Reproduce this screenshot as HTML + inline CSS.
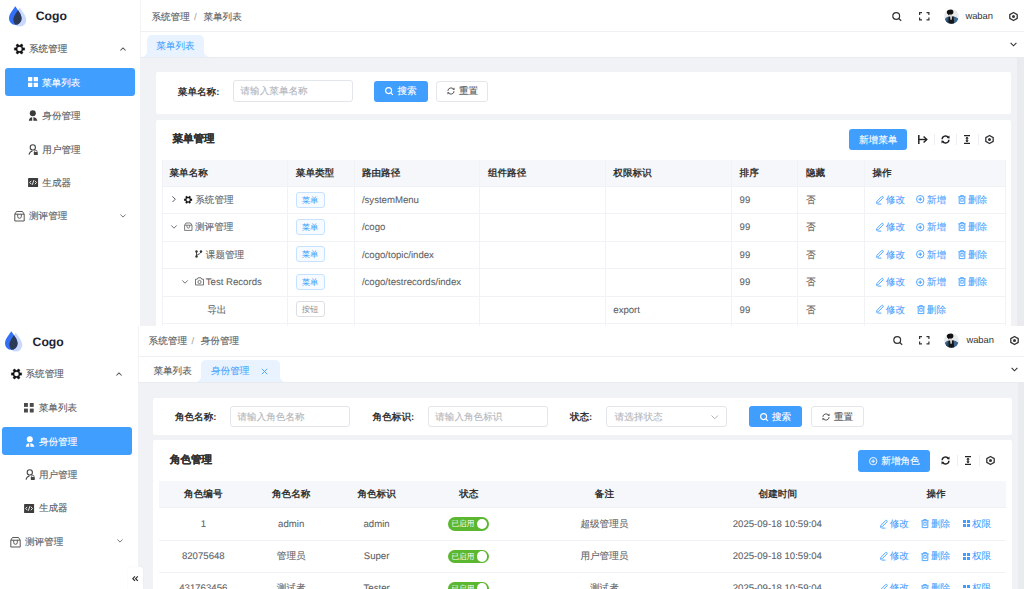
<!DOCTYPE html>
<html><head><meta charset="utf-8"><style>
*{box-sizing:border-box;margin:0;padding:0}
html,body{text-rendering:geometricPrecision;width:1024px;height:589px;overflow:hidden;background:#fff;font-family:"Liberation Sans",sans-serif;color:#5a5d63}
.f{position:absolute;left:0;width:1024px;overflow:hidden;background:#fff}
.a{position:absolute;white-space:nowrap}
.t{font-size:9.6px;line-height:12px;height:12px;margin-top:1px;-webkit-text-stroke:0.1px currentColor}
.b{font-weight:bold;color:#333;-webkit-text-stroke:0}
.side{position:absolute;left:0;top:0;bottom:0;background:#fff}
.gray{position:absolute;background:#f0f2f5}
.card{position:absolute;background:#fff;border-radius:2px}
.inp{position:absolute;border:1px solid #e2e5ea;border-radius:3px;background:#fff}
.ph{color:#b4b6bb}
.btnp{position:absolute;background:#409eff;border-radius:3px;color:#fff}
.btnd{position:absolute;border:1px solid #e3e6eb;border-radius:3px;background:#fff;color:#555}
.hl{position:absolute;height:1px;background:#ebeef5}
.vl{position:absolute;width:1px;background:#ebeef5}
.blue{color:#409eff;-webkit-text-stroke:0.05px #409eff}
.tag{position:absolute;border:1px solid #c6e2ff;border-radius:3px;background:#f7fbff;color:#409eff;font-size:8.3px;line-height:14px;text-align:center}
.tagg{border-color:#dedfe3;background:#fff;color:#909399}
.c{text-align:center}
.td{color:#606266;-webkit-text-stroke:0.08px #606266}
.tab{position:absolute;background:#e8f3ff;border-radius:5px 5px 0 0}
.tab:before,.tab:after{content:"";position:absolute;bottom:0;width:5px;height:5px;background:radial-gradient(circle at 0 0,transparent 5px,#e8f3ff 5.5px)}
.tab:before{left:-5px;background:radial-gradient(circle at 0 0,transparent 4.5px,#e8f3ff 5px)}
.tab:after{right:-5px;background:radial-gradient(circle at 100% 0,transparent 4.5px,#e8f3ff 5px)}
.cogo{font-size:12.2px;line-height:14px;font-weight:bold;color:#1d2433}
.tt{font-size:10.5px;line-height:14px;-webkit-text-stroke:0.25px #333}
svg{position:absolute;overflow:visible}
</style></head><body>

<svg width="0" height="0" style="position:absolute">
<defs>
 <g id="gear"><path fill="#111" fill-rule="evenodd" stroke="#111" stroke-width="0.2" stroke-linejoin="round" d="M8.98 3.73 L10.76 3.79 L10.76 6.21 L8.98 6.27 L8.33 7.38 L9.18 8.95 L7.08 10.16 L6.14 8.64 L4.86 8.64 L3.92 10.16 L1.82 8.95 L2.67 7.38 L2.02 6.27 L0.24 6.21 L0.24 3.79 L2.02 3.73 L2.67 2.62 L1.82 1.05 L3.92 -0.16 L4.86 1.36 L6.14 1.36 L7.08 -0.16 L9.18 1.05 L8.33 2.62Z M7.80 5.0 A2.3 2.3 0 1 0 3.20 5.0 A2.3 2.3 0 1 0 7.80 5.0Z"/></g>
 <g id="grid"><rect x="0" y="0" width="4.3" height="4.3" rx="0.5"/><rect x="5.7" y="0" width="4.3" height="4.3" rx="0.5"/><rect x="0" y="5.7" width="4.3" height="4.3" rx="0.5"/><rect x="5.7" y="5.7" width="4.3" height="4.3" rx="0.5"/></g>
 <g id="role"><circle cx="4.8" cy="3.2" r="3"/><path d="M0.8 10.8 C1 8.6 2.2 7.4 4.2 7.2 L4.2 10.8Z"/><path d="M5.4 7.2 C7.6 7.4 9 8.6 9.4 10.8 L5.4 10.8Z"/></g>
 <g id="user"><circle cx="4.8" cy="3.4" r="2.6" fill="none" stroke="#444" stroke-width="1.1"/><path d="M1 10.6 C1.5 8.6 2.8 7.3 4.5 7" fill="none" stroke="#444" stroke-width="1.1"/><rect x="5.8" y="8" width="4" height="3" rx="0.4" fill="#444"/><path d="M6.6 8.2 V7.4 A1.2 1.2 0 0 1 9 7.4 V8.2" fill="none" stroke="#444" stroke-width="0.8"/></g>
 <g id="code"><rect x="0" y="0" width="10" height="9" rx="0.6" fill="#3d3d3d"/><path d="M3.2 2.8 L1.6 4.5 L3.2 6.2 M6.8 2.8 L8.4 4.5 L6.8 6.2 M5.8 2.2 L4.2 6.8" fill="none" stroke="#fff" stroke-width="0.9"/></g>
 <g id="box"><path d="M0.8 4.2 L2.5 1.5 L8.5 1.5 L10.2 4.2 L10.2 11 L0.8 11 Z M0.8 4.2 L10.2 4.2" fill="none" stroke="#555" stroke-width="1"/><path d="M3.7 4.2 V6.5 A1.8 1.8 0 0 0 7.3 6.5 V4.2" fill="none" stroke="#555" stroke-width="1"/></g>
 <g id="search"><circle cx="4.2" cy="4" r="3.4" fill="none" stroke="#333" stroke-width="1.2"/><path d="M6.7 6.5 L9.2 8.8" stroke="#333" stroke-width="1.2"/></g>
 <g id="search2"><circle cx="3.6" cy="3.6" r="3" fill="none" stroke-width="1.1"/><path d="M5.8 5.8 L7.9 7.9" stroke-width="1.2"/></g>
 <g id="full"><path d="M0.6 3 V0.6 H3 M7.5 0.6 H9.9 V3 M9.9 5.5 V7.9 H7.5 M3 7.9 H0.6 V5.5" fill="none" stroke="#333" stroke-width="1.2"/></g>
 <g id="hex"><path d="M4.5 0.5 L8.2 2.6 L8.2 6.4 L4.5 8.5 L0.8 6.4 L0.8 2.6 Z" fill="none" stroke="#333" stroke-width="1.3" stroke-linejoin="round"/><circle cx="4.5" cy="4.5" r="1.5" fill="#333"/></g>
 <g id="refresh"><path d="M1.1 4.3 A3.4 3.4 0 0 1 7.4 2.6" fill="none" stroke="#222" stroke-width="1.4"/><path d="M7.9 4.7 A3.4 3.4 0 0 1 1.6 6.4" fill="none" stroke="#222" stroke-width="1.4"/><path d="M5.6 2.9 L8.6 3.6 L8.4 0.6Z" fill="#222"/><path d="M3.4 6.1 L0.4 5.4 L0.6 8.4Z" fill="#222"/></g>
 <g id="refresh2"><path d="M0.9 3.9 A3.1 3.1 0 0 1 6.6 2.3" fill="none" stroke="#555" stroke-width="1"/><path d="M7.1 4.1 A3.1 3.1 0 0 1 1.4 5.7" fill="none" stroke="#555" stroke-width="1"/><path d="M5.3 2.5 L7.6 3 L7.5 0.6Z" fill="#555"/><path d="M2.7 5.5 L0.4 5 L0.5 7.4Z" fill="#555"/></g>
 <g id="export"><path d="M0.8 0 V9" stroke="#222" stroke-width="1.5"/><path d="M0.8 4.5 H8.6" stroke="#222" stroke-width="1.4"/><path d="M5.6 1.4 L8.8 4.5 L5.6 7.6" fill="none" stroke="#222" stroke-width="1.4"/></g>
 <g id="height"><path d="M0 0.6 H6 M0 8.4 H6" stroke="#222" stroke-width="1.2"/><path d="M3 2.6 V6.4" stroke="#222" stroke-width="1.3"/><path d="M1.2 3.6 L3 1.7 L4.8 3.6Z M1.2 5.4 L3 7.3 L4.8 5.4Z" fill="#222"/></g>
 <g id="edit"><path d="M1.6 8.4 L1.9 6.4 L6.6 1.6 A0.95 0.95 0 0 1 7.95 2.95 L3.2 7.7 Z" fill="none" stroke="#409eff" stroke-width="0.9" stroke-linejoin="round"/><path d="M2.6 9.1 H6.4" stroke="#409eff" stroke-width="0.9"/></g>
 <g id="plus"><circle cx="4.2" cy="4.2" r="3.7" fill="none" stroke="#409eff" stroke-width="0.9"/><path d="M4.2 2.4 V6 M2.4 4.2 H6" stroke="#409eff" stroke-width="1"/></g>
 <g id="plus2"><circle cx="4.2" cy="4.2" r="3.7" fill="none" stroke="#fff" stroke-width="0.9"/><path d="M4.2 2.3 V6.1 M2.3 4.2 H6.1" stroke="#fff" stroke-width="0.9"/></g>
 <g id="del"><path d="M0.3 1.8 H7.7 M2.6 1.8 V0.6 H5.4 V1.8 M1.2 1.8 V8.6 H6.8 V1.8" fill="none" stroke="#409eff" stroke-width="0.9"/><rect x="2.8" y="3.6" width="2.4" height="2.6" fill="none" stroke="#409eff" stroke-width="0.8"/></g>
 <g id="perm"><rect x="0" y="0" width="3" height="3" fill="#409eff"/><rect x="4" y="0" width="3" height="3" fill="#409eff"/><rect x="0" y="4" width="3" height="3" fill="#409eff"/><rect x="4" y="4" width="3" height="3" fill="#409eff"/></g>
 <g id="branch"><circle cx="1.5" cy="1.5" r="1.2" fill="#333"/><circle cx="1.5" cy="6.5" r="1.2" fill="#333"/><circle cx="6" cy="1.5" r="1.2" fill="#333"/><path d="M1.5 1.5 V6.5 M6 1.5 C6 4 3 4 1.5 5.5" fill="none" stroke="#333" stroke-width="0.9"/></g>
 <g id="camera"><path d="M0.5 2.2 H2.3 L3 0.8 H6 L6.7 2.2 H8.5 V8 H0.5 Z" fill="none" stroke="#666" stroke-width="0.9"/><circle cx="4.5" cy="5" r="1.6" fill="none" stroke="#666" stroke-width="0.9"/></g>
 <g id="box2"><path d="M0.6 3.2 L2 1 L6.6 1 L8 3.2 L8 8.4 L0.6 8.4 Z M0.6 3.2 H8" fill="none" stroke="#666" stroke-width="0.85"/><path d="M3 3.2 V4.8 A1.3 1.3 0 0 0 5.6 4.8 V3.2" fill="none" stroke="#666" stroke-width="0.85"/></g>
 <g id="gear2"><use href="#gear" transform="scale(0.75)"/></g>
 <g id="avatar">
   <clipPath id="avc"><circle cx="7.5" cy="7.5" r="7.3"/></clipPath>
   <g clip-path="url(#avc)">
     <rect width="15" height="15" fill="#e9eaec"/>
     <path d="M0 15 L0.5 10.5 C1.5 8.5 3.5 7.8 5 7.6 L10 7.4 C12 7.8 14 9 15 10.5 L15 15Z" fill="#3d678f"/>
     <path d="M1.5 13 C3 10 4 9 5 8.6 L4.5 15 Z" fill="#2a4a6a"/>
     <path d="M4.6 7.8 L9.6 7.6 L10.2 15 L4.4 15Z" fill="#151517"/>
     <path d="M5.6 4.4 L8 4.4 L7.9 10.6 L6.6 11 Z" fill="#dcd3c4"/>
     <ellipse cx="6.1" cy="2.9" rx="3.3" ry="2.6" fill="#111"/>
     <path d="M3.2 3.5 L4.8 6.5 L5.6 4.6Z" fill="#111"/>
   </g>
 </g>
</defs></svg>

<!-- ================= FRAME 1 ================= -->
<div class="f" style="top:0;height:326px">
  <!-- content gray -->
  <div class="gray" style="left:140px;top:57px;width:884px;height:269px"></div>
  <div class="a" style="left:1017px;top:57px;width:7px;height:269px;background:#e9ebef"></div>
  <!-- sidebar -->
  <div class="side" style="width:140px">
    <svg style="left:0;top:0" width="30" height="30" viewBox="0 0 30 30">
      <path d="M19.8 7.7 C22 11 26.3 15.8 26.3 20.1 A6.5 6.5 0 0 1 13.3 20.1 C13.3 15.8 17.6 11 19.8 7.7Z" fill="#c9d8fb"/>
      <path d="M15.3 6.3 C17.5 9.6 21.6 14 21.6 18.5 A6.3 6.3 0 0 1 9 18.5 C9 14 13.1 9.6 15.3 6.3Z" fill="#3370f5"/>
      <clipPath id="c1"><path d="M19.8 7.7 C22 11 26.3 15.8 26.3 20.1 A6.5 6.5 0 0 1 13.3 20.1 C13.3 15.8 17.6 11 19.8 7.7Z"/></clipPath>
      <path clip-path="url(#c1)" d="M15.3 6.3 C17.5 9.6 21.6 14 21.6 18.5 A6.3 6.3 0 0 1 9 18.5 C9 14 13.1 9.6 15.3 6.3Z" fill="#2c3a55"/>
    </svg>
    <div class="a cogo" style="left:35.8px;top:9.3px">Cogo</div>

    <svg style="left:14px;top:43.6px" width="11" height="10" viewBox="0 0 11 10"><use href="#gear"/></svg>
    <div class="a t" style="left:28.9px;top:43px;color:#555">系统管理</div>
    <svg style="left:120px;top:47px" width="6" height="4" viewBox="0 0 6 4"><path d="M0.4 3.5 L3 0.9 L5.6 3.5" fill="none" stroke="#555" stroke-width="1.05"/></svg>

    <div class="a" style="left:5px;top:68px;width:130px;height:28px;background:#409eff;border-radius:3px"></div>
    <svg style="left:28px;top:77px" width="10" height="10" viewBox="0 0 10 10"><use href="#grid" fill="#fff"/></svg>
    <div class="a t" style="left:42px;top:76.5px;color:#fff">菜单列表</div>

    <svg style="left:28px;top:109.5px" width="10" height="11" viewBox="0 0 10 11"><use href="#role" fill="#3a3a3a"/></svg>
    <div class="a t" style="left:42.3px;top:109.5px">身份管理</div>

    <svg style="left:28px;top:143.5px" width="10" height="11" viewBox="0 0 10 11"><use href="#user" /></svg>
    <div class="a t" style="left:42.3px;top:143.5px">用户管理</div>

    <svg style="left:27.7px;top:177.8px" width="10.2" height="9" viewBox="0 0 10 9"><use href="#code"/></svg>
    <div class="a t" style="left:42.3px;top:176.5px">生成器</div>

    <svg style="left:13.9px;top:210px" width="11" height="11.6" viewBox="0 0 11 11.6"><use href="#box"/></svg>
    <div class="a t" style="left:29px;top:210.1px">测评管理</div>
    <svg style="left:120px;top:213.5px" width="6" height="4" viewBox="0 0 6 4"><path d="M0.4 0.5 L3 3.1 L5.6 0.5" fill="none" stroke="#777" stroke-width="1"/></svg>
  </div>
  <div class="vl" style="left:140px;top:0;height:57px;background:#f2f3f5"></div>

  <!-- header -->
  <div class="a t" style="left:151.4px;top:10.9px">系统管理</div>
  <div class="a t" style="left:194px;top:10.9px;color:#aaa">/</div>
  <div class="a t" style="left:203.4px;top:10.9px">菜单列表</div>
  <svg style="left:892.4px;top:12px" width="10" height="9" viewBox="0 0 10 9"><use href="#search"/></svg>
  <svg style="left:918.7px;top:12px" width="10.5" height="8.5" viewBox="0 0 10.5 8.5"><use href="#full"/></svg>
  <svg style="left:944px;top:8.5px" width="15" height="15" viewBox="0 0 15 15"><use href="#avatar"/></svg>
  <div class="a" style="left:965.4px;top:10px;font-size:9.4px;line-height:12px;color:#333">waban</div>
  <svg style="left:1008.9px;top:11.6px" width="9" height="9" viewBox="0 0 9 9"><use href="#hex"/></svg>
  <div class="hl" style="left:140px;top:31px;width:884px;background:#eef0f3"></div>

  <!-- tabs -->
  <div class="tab" style="left:147px;top:35px;width:57.3px;height:22px"></div>
  <div class="hl" style="left:140px;top:57px;width:877px;background:#e9ebee"></div>
  <div class="a t blue" style="left:156.2px;top:40px">菜单列表</div>
  <svg style="left:1010px;top:42px" width="7" height="5" viewBox="0 0 7 5"><path d="M0.6 0.8 L3.5 3.8 L6.4 0.8" fill="none" stroke="#333" stroke-width="1.1"/></svg>

  <!-- search card -->
  <div class="card" style="left:156px;top:72.3px;width:855px;height:41.8px"></div>
  <div class="a t b" style="left:177.8px;top:85.5px">菜单名称:</div>
  <div class="inp" style="left:233.2px;top:80.4px;width:120.2px;height:21.2px"></div>
  <div class="a t ph" style="left:240.5px;top:85px">请输入菜单名称</div>
  <div class="btnp" style="left:374px;top:80.5px;width:53.5px;height:21.5px"></div>
  <svg style="left:385.3px;top:87.2px" width="8" height="8" viewBox="0 0 8 8"><use href="#search2" stroke="#fff"/></svg>
  <div class="a t" style="left:397.5px;top:85px;color:#fff">搜索</div>
  <div class="btnd" style="left:435.7px;top:80.5px;width:52.6px;height:21.5px"></div>
  <svg style="left:447px;top:87px" width="8" height="8" viewBox="0 0 8 8"><use href="#refresh2"/></svg>
  <div class="a t" style="left:459px;top:85px">重置</div>

  <!-- table card -->
  <div class="card" style="left:156px;top:120px;width:855px;height:220px"></div>
  <div class="a b tt" style="left:172.5px;top:132px">菜单管理</div>
  <div class="btnp" style="left:849px;top:129px;width:58px;height:21px"></div>
  <div class="a t" style="left:859px;top:133.5px;color:#fff">新增菜单</div>
  <svg style="left:917.9px;top:135px" width="10" height="9" viewBox="0 0 10 9"><use href="#export"/></svg>
  <div class="vl" style="left:933.7px;top:134px;height:11px;background:#eceef1"></div>
  <svg style="left:940.9px;top:135px" width="9" height="9" viewBox="0 0 9 9"><use href="#refresh"/></svg>
  <div class="vl" style="left:956.1px;top:134px;height:11px;background:#eceef1"></div>
  <svg style="left:964.3px;top:135px" width="6" height="9" viewBox="0 0 6 9"><use href="#height"/></svg>
  <div class="vl" style="left:978.1px;top:134px;height:11px;background:#eceef1"></div>
  <svg style="left:984.9px;top:135px" width="9" height="9" viewBox="0 0 9 9"><use href="#hex"/></svg>

  <!-- table -->
  <div class="a" style="left:162.2px;top:160px;width:842.8px;height:26px;background:#f5f7fa"></div>
  <div class="a t b" style="left:169.5px;top:166.7px;">菜单名称</div>
<div class="a t b" style="left:295.8px;top:166.7px;">菜单类型</div>
<div class="a t b" style="left:361.9px;top:166.7px;">路由路径</div>
<div class="a t b" style="left:487.9px;top:166.7px;">组件路径</div>
<div class="a t b" style="left:613.3px;top:166.7px;">权限标识</div>
<div class="a t b" style="left:739.6px;top:166.7px;">排序</div>
<div class="a t b" style="left:806px;top:166.7px;">隐藏</div>
<div class="a t b" style="left:872.5px;top:166.7px;">操作</div>
<div class="vl" style="left:287.2px;top:160px;height:167px;background:#f0f2f5"></div>
<div class="vl" style="left:353.8px;top:160px;height:167px;background:#f0f2f5"></div>
<div class="vl" style="left:478.9px;top:160px;height:167px;background:#f0f2f5"></div>
<div class="vl" style="left:605px;top:160px;height:167px;background:#f0f2f5"></div>
<div class="vl" style="left:730.8px;top:160px;height:167px;background:#f0f2f5"></div>
<div class="vl" style="left:797.4px;top:160px;height:167px;background:#f0f2f5"></div>
<div class="vl" style="left:864px;top:160px;height:167px;background:#f0f2f5"></div>
<div class="vl" style="left:162.2px;top:160px;height:167px;background:#f0f2f5"></div>
<div class="vl" style="left:1005px;top:160px;height:167px;background:#f0f2f5"></div>
<div class="hl" style="left:162.2px;top:186px;width:842.8px;background:#f1f2f5"></div>
<div class="hl" style="left:162.2px;top:213px;width:842.8px;background:#f1f2f5"></div>
<div class="hl" style="left:162.2px;top:240.5px;width:842.8px;background:#f1f2f5"></div>
<div class="hl" style="left:162.2px;top:268px;width:842.8px;background:#f1f2f5"></div>
<div class="hl" style="left:162.2px;top:295.5px;width:842.8px;background:#f1f2f5"></div>
<div class="hl" style="left:162.2px;top:323px;width:842.8px;background:#f1f2f5"></div>
<svg style="left:172.3px;top:196.4px" width="4" height="6.4" viewBox="0 0 4 6.4"><path d="M0.5 0.4 L3.3 3.2 L0.5 6" fill="none" stroke="#555" stroke-width="1"/></svg>
<svg style="left:184.2px;top:195.7px" width="8.2" height="7.6" viewBox="0 0 8.2 7.6" ><use href="#gear2"/></svg>
<div class="a t td" style="left:195.2px;top:194.1px;">系统管理</div>
<div class="tag" style="left:295.5px;top:191.5px;width:29px;height:16px">菜单</div>
<div class="a t td" style="left:361.9px;top:194.1px;">/systemMenu</div>
<div class="a t td" style="left:739.6px;top:194.1px;">99</div>
<div class="a t td" style="left:806px;top:194.1px;">否</div>
<svg style="left:875.3px;top:194.5px" width="9" height="10" viewBox="0 0 9 10" ><use href="#edit"/></svg>
<div class="a t blue" style="left:885.8px;top:194.1px;">修改</div>
<svg style="left:916.3px;top:195.3px" width="8.5" height="8.5" viewBox="0 0 8.5 8.5" ><use href="#plus"/></svg>
<div class="a t blue" style="left:926.8px;top:194.1px;">新增</div>
<svg style="left:957.9px;top:194.9px" width="8" height="9" viewBox="0 0 8 9" ><use href="#del"/></svg>
<div class="a t blue" style="left:967.9px;top:194.1px;">删除</div>
<svg style="left:171.2px;top:224.95px" width="6" height="4" viewBox="0 0 6 4"><path d="M0.3 0.4 L3 3.2 L5.7 0.4" fill="none" stroke="#666" stroke-width="0.9"/></svg>
<svg style="left:184px;top:222.25px" width="8.6" height="9" viewBox="0 0 8.6 9" ><use href="#box2"/></svg>
<div class="a t td" style="left:195px;top:221.35px;">测评管理</div>
<div class="tag" style="left:295.5px;top:218.75px;width:29px;height:16px">菜单</div>
<div class="a t td" style="left:361.9px;top:221.35px;">/cogo</div>
<div class="a t td" style="left:739.6px;top:221.35px;">99</div>
<div class="a t td" style="left:806px;top:221.35px;">否</div>
<svg style="left:875.3px;top:221.75px" width="9" height="10" viewBox="0 0 9 10" ><use href="#edit"/></svg>
<div class="a t blue" style="left:885.8px;top:221.35px;">修改</div>
<svg style="left:916.3px;top:222.55px" width="8.5" height="8.5" viewBox="0 0 8.5 8.5" ><use href="#plus"/></svg>
<div class="a t blue" style="left:926.8px;top:221.35px;">新增</div>
<svg style="left:957.9px;top:222.15px" width="8" height="9" viewBox="0 0 8 9" ><use href="#del"/></svg>
<div class="a t blue" style="left:967.9px;top:221.35px;">删除</div>
<svg style="left:195px;top:250.25px" width="7.5" height="8" viewBox="0 0 7.5 8" ><use href="#branch"/></svg>
<div class="a t td" style="left:205.8px;top:248.85px;">课题管理</div>
<div class="tag" style="left:295.5px;top:246.25px;width:29px;height:16px">菜单</div>
<div class="a t td" style="left:361.9px;top:248.85px;">/cogo/topic/index</div>
<div class="a t td" style="left:739.6px;top:248.85px;">99</div>
<div class="a t td" style="left:806px;top:248.85px;">否</div>
<svg style="left:875.3px;top:249.25px" width="9" height="10" viewBox="0 0 9 10" ><use href="#edit"/></svg>
<div class="a t blue" style="left:885.8px;top:248.85px;">修改</div>
<svg style="left:916.3px;top:250.05px" width="8.5" height="8.5" viewBox="0 0 8.5 8.5" ><use href="#plus"/></svg>
<div class="a t blue" style="left:926.8px;top:248.85px;">新增</div>
<svg style="left:957.9px;top:249.65px" width="8" height="9" viewBox="0 0 8 9" ><use href="#del"/></svg>
<div class="a t blue" style="left:967.9px;top:248.85px;">删除</div>
<svg style="left:182px;top:279.95px" width="6" height="4" viewBox="0 0 6 4"><path d="M0.3 0.4 L3 3.2 L5.7 0.4" fill="none" stroke="#666" stroke-width="0.9"/></svg>
<svg style="left:194.6px;top:277.45px" width="9" height="8.6" viewBox="0 0 9 8.6" ><use href="#camera"/></svg>
<div class="a t td" style="left:205.8px;top:276.35px;">Test Records</div>
<div class="tag" style="left:295.5px;top:273.75px;width:29px;height:16px">菜单</div>
<div class="a t td" style="left:361.9px;top:276.35px;">/cogo/testrecords/index</div>
<div class="a t td" style="left:739.6px;top:276.35px;">99</div>
<div class="a t td" style="left:806px;top:276.35px;">否</div>
<svg style="left:875.3px;top:276.75px" width="9" height="10" viewBox="0 0 9 10" ><use href="#edit"/></svg>
<div class="a t blue" style="left:885.8px;top:276.35px;">修改</div>
<svg style="left:916.3px;top:277.55px" width="8.5" height="8.5" viewBox="0 0 8.5 8.5" ><use href="#plus"/></svg>
<div class="a t blue" style="left:926.8px;top:276.35px;">新增</div>
<svg style="left:957.9px;top:277.15px" width="8" height="9" viewBox="0 0 8 9" ><use href="#del"/></svg>
<div class="a t blue" style="left:967.9px;top:276.35px;">删除</div>
<div class="a t td" style="left:207.2px;top:303.85px;">导出</div>
<div class="tag tagg" style="left:295.5px;top:301.25px;width:29px;height:16px">按钮</div>
<div class="a t td" style="left:361.9px;top:303.85px;"></div>
<div class="a t td" style="left:613.3px;top:303.85px;">export</div>
<div class="a t td" style="left:739.6px;top:303.85px;">99</div>
<div class="a t td" style="left:806px;top:303.85px;">否</div>
<svg style="left:875.3px;top:304.25px" width="9" height="10" viewBox="0 0 9 10" ><use href="#edit"/></svg>
<div class="a t blue" style="left:885.8px;top:303.85px;">修改</div>
<svg style="left:916.8px;top:304.65px" width="8" height="9" viewBox="0 0 8 9" ><use href="#del"/></svg>
<div class="a t blue" style="left:926.8px;top:303.85px;">删除</div>
</div>

<!-- ================= FRAME 2 ================= -->
<div class="f" style="top:326px;height:263px">
 <div class="a" style="left:0;top:-326px;width:1024px;height:589px">
  <!-- content gray -->
  <div class="gray" style="left:137.5px;top:382px;width:886.5px;height:207px"></div>
  <div class="a" style="left:1017.5px;top:382px;width:6.5px;height:207px;background:#e9ebef"></div>
  <!-- sidebar -->
  <div class="a" style="left:0;top:326px;width:137.5px;height:263px;background:#fff"></div>
  <svg style="left:-4.1px;top:325px" width="30" height="30" viewBox="0 0 30 30">
      <path d="M19.8 7.7 C22 11 26.3 15.8 26.3 20.1 A6.5 6.5 0 0 1 13.3 20.1 C13.3 15.8 17.6 11 19.8 7.7Z" fill="#c9d8fb"/>
      <path d="M15.3 6.3 C17.5 9.6 21.6 14 21.6 18.5 A6.3 6.3 0 0 1 9 18.5 C9 14 13.1 9.6 15.3 6.3Z" fill="#3370f5"/>
      <path clip-path="url(#c1)" d="M15.3 6.3 C17.5 9.6 21.6 14 21.6 18.5 A6.3 6.3 0 0 1 9 18.5 C9 14 13.1 9.6 15.3 6.3Z" fill="#2c3a55"/>
  </svg>
  <div class="a cogo" style="left:32.6px;top:334.5px">Cogo</div>

  <svg style="left:10.5px;top:368.5px" width="11" height="10" viewBox="0 0 11 10"><use href="#gear"/></svg>
  <div class="a t side-t" style="left:25.5px;top:368px">系统管理</div>
  <svg style="left:116.3px;top:372px" width="6" height="4" viewBox="0 0 6 4"><path d="M0.4 3.5 L3 0.9 L5.6 3.5" fill="none" stroke="#555" stroke-width="1.05"/></svg>

  <svg style="left:24.4px;top:403px" width="10" height="10" viewBox="0 0 10 10"><rect x="0" y="0" width="3.9" height="3.9" fill="#4a4a4a"/><rect x="5.8" y="0" width="3.9" height="3.9" fill="#4a4a4a"/><rect x="0" y="5.6" width="3.9" height="3.9" fill="#4a4a4a"/><rect x="5.8" y="5.6" width="3.9" height="3.9" fill="#4a4a4a"/></svg>
  <div class="a t side-t" style="left:38.7px;top:401.5px">菜单列表</div>

  <div class="a" style="left:1.5px;top:426.7px;width:130.5px;height:28.3px;background:#409eff;border-radius:3px"></div>
  <svg style="left:24.9px;top:435.5px" width="10" height="11" viewBox="0 0 10 11"><use href="#role" fill="#fff"/></svg>
  <div class="a t" style="left:38.9px;top:435.5px;color:#fff">身份管理</div>

  <svg style="left:24.5px;top:469px" width="10" height="11" viewBox="0 0 10 11"><use href="#user"/></svg>
  <div class="a t side-t" style="left:38.9px;top:468.9px">用户管理</div>

  <svg style="left:24.2px;top:503.5px" width="10.2" height="9" viewBox="0 0 10 9"><use href="#code"/></svg>
  <div class="a t side-t" style="left:38.9px;top:502.3px">生成器</div>

  <svg style="left:10px;top:535.5px" width="11" height="11.6" viewBox="0 0 11 11.6"><use href="#box"/></svg>
  <div class="a t side-t" style="left:24.9px;top:535.7px">测评管理</div>
  <svg style="left:116.8px;top:539.3px" width="6" height="4" viewBox="0 0 6 4"><path d="M0.4 0.5 L3 3.1 L5.6 0.5" fill="none" stroke="#777" stroke-width="1"/></svg>

  <!-- collapse button -->
  <div class="a" style="left:127.5px;top:567px;width:15.6px;height:30px;background:#fff;border-radius:3px;box-shadow:0 0 1.5px rgba(0,0,0,0.08)"></div>
  <svg style="left:132.2px;top:575.8px" width="6.3" height="5.3" viewBox="0 0 6.3 5.3"><path d="M3 0.4 L0.8 2.65 L3 4.9 M5.8 0.4 L3.6 2.65 L5.8 4.9" fill="none" stroke="#222" stroke-width="1.1"/></svg>

  <div class="vl" style="left:137.5px;top:326px;height:56px;background:#f2f3f5"></div>

  <!-- header -->
  <div class="a t" style="left:148.6px;top:335.4px">系统管理</div>
  <div class="a t" style="left:191.5px;top:335.4px;color:#aaa">/</div>
  <div class="a t" style="left:200.7px;top:335.4px">身份管理</div>
  <svg style="left:892.5px;top:335.8px" width="10" height="9" viewBox="0 0 10 9"><use href="#search"/></svg>
  <svg style="left:919.3px;top:335.8px" width="10.5" height="8.5" viewBox="0 0 10.5 8.5"><use href="#full"/></svg>
  <svg style="left:944.3px;top:332.5px" width="15" height="15" viewBox="0 0 15 15"><use href="#avatar"/></svg>
  <div class="a" style="left:966.4px;top:333.8px;font-size:9.4px;line-height:12px;color:#333">waban</div>
  <svg style="left:1009.8px;top:335.6px" width="9" height="9" viewBox="0 0 9 9"><use href="#hex"/></svg>
  <div class="hl" style="left:137.5px;top:356.3px;width:886.5px;background:#eef0f3"></div>

  <!-- tabs -->
  <div class="a t" style="left:153.4px;top:365.3px">菜单列表</div>
  <div class="tab" style="left:201px;top:359.7px;width:79px;height:22.3px"></div>
  <div class="hl" style="left:137.5px;top:382px;width:880px;background:#e9ebee"></div>
  <div class="a t blue" style="left:211px;top:365.3px">身份管理</div>
  <svg style="left:261.4px;top:368px" width="7" height="7" viewBox="0 0 7 7"><path d="M0.8 0.8 L6.2 6.2 M6.2 0.8 L0.8 6.2" stroke="#409eff" stroke-width="0.9"/></svg>
  <svg style="left:1010.6px;top:366.8px" width="7" height="5" viewBox="0 0 7 5"><path d="M0.6 0.8 L3.5 3.8 L6.4 0.8" fill="none" stroke="#333" stroke-width="1.1"/></svg>

  <!-- search card -->
  <div class="card" style="left:153.3px;top:397.8px;width:858.4px;height:37.3px"></div>
  <div class="a t b" style="left:174.9px;top:410.5px">角色名称:</div>
  <div class="inp" style="left:230.2px;top:405.5px;width:120.2px;height:21.5px"></div>
  <div class="a t ph" style="left:237.4px;top:410.5px">请输入角色名称</div>
  <div class="a t b" style="left:372.6px;top:410.5px">角色标识:</div>
  <div class="inp" style="left:428px;top:405.5px;width:120.3px;height:21.5px"></div>
  <div class="a t ph" style="left:435.2px;top:410.5px">请输入角色标识</div>
  <div class="a t b" style="left:569.9px;top:410.5px">状态:</div>
  <div class="inp" style="left:606.4px;top:406px;width:120.2px;height:21.2px"></div>
  <div class="a t ph" style="left:614.7px;top:410.5px">请选择状态</div>
  <svg style="left:711px;top:415px" width="7.5" height="4.5" viewBox="0 0 7.5 4.5"><path d="M0.5 0.5 L3.75 3.8 L7 0.5" fill="none" stroke="#aaa" stroke-width="0.9"/></svg>
  <div class="btnp" style="left:748.5px;top:406px;width:53.8px;height:21.2px"></div>
  <svg style="left:759.8px;top:412.6px" width="8" height="8" viewBox="0 0 8 8"><use href="#search2" stroke="#fff"/></svg>
  <div class="a t" style="left:772px;top:410.5px;color:#fff">搜索</div>
  <div class="btnd" style="left:810.6px;top:406px;width:53.1px;height:21.2px"></div>
  <svg style="left:821.5px;top:412.5px" width="8" height="8" viewBox="0 0 8 8"><use href="#refresh2"/></svg>
  <div class="a t" style="left:834px;top:410.5px">重置</div>

  <!-- table card -->
  <div class="card" style="left:153.4px;top:440.3px;width:858.3px;height:160px"></div>
  <div class="a b tt" style="left:169.9px;top:452.6px">角色管理</div>
  <div class="btnp" style="left:857.5px;top:450.2px;width:72.7px;height:21.4px"></div>
  <svg style="left:868.8px;top:456.8px" width="8.4" height="8.4" viewBox="0 0 8.4 8.4"><use href="#plus2"/></svg>
  <div class="a t" style="left:881.3px;top:455px;color:#fff">新增角色</div>
  <svg style="left:941.4px;top:456.4px" width="9" height="9" viewBox="0 0 9 9"><use href="#refresh"/></svg>
  <div class="vl" style="left:957.1px;top:455px;height:11px;background:#eceef1"></div>
  <svg style="left:965.2px;top:456.4px" width="6" height="9" viewBox="0 0 6 9"><use href="#height"/></svg>
  <div class="vl" style="left:978.5px;top:455px;height:11px;background:#eceef1"></div>
  <svg style="left:985.6px;top:456.4px" width="9" height="9" viewBox="0 0 9 9"><use href="#hex"/></svg>

  <!-- table -->
  <div class="a" style="left:159.3px;top:480.7px;width:846.7px;height:26.6px;background:#f5f7fa"></div>
  <div class="a t c b" style="left:103.30px;top:487.8px;width:200px;">角色编号</div>
<div class="a t c b" style="left:191.20px;top:487.8px;width:200px;">角色名称</div>
<div class="a t c b" style="left:276.60px;top:487.8px;width:200px;">角色标识</div>
<div class="a t c b" style="left:368.80px;top:487.8px;width:200px;">状态</div>
<div class="a t c b" style="left:504.40px;top:487.8px;width:200px;">备注</div>
<div class="a t c b" style="left:677.80px;top:487.8px;width:200px;">创建时间</div>
<div class="a t c b" style="left:836.00px;top:487.8px;width:200px;">操作</div>
<div class="hl" style="left:159.3px;top:507.3px;width:846.7px;background:#f1f2f5"></div>
<div class="hl" style="left:159.3px;top:540.3px;width:846.7px;background:#f1f2f5"></div>
<div class="hl" style="left:159.3px;top:572.3px;width:846.7px;background:#f1f2f5"></div>
<div class="a t c td" style="left:103.30px;top:517.9px;width:200px;">1</div>
<div class="a t c td" style="left:191.20px;top:517.9px;width:200px;">admin</div>
<div class="a t c td" style="left:276.60px;top:517.9px;width:200px;">admin</div>
<div class="a" style="left:448px;top:517.0px;width:41px;height:13.8px;background:#5cb730;border-radius:7px"></div>
<div class="a" style="left:477px;top:518.6999999999999px;width:10.4px;height:10.4px;background:#fff;border-radius:50%"></div>
<div class="a" style="left:451.5px;top:518.3px;font-size:7.6px;line-height:11px;color:#fff">已启用</div>
<div class="a t c td" style="left:504.40px;top:517.9px;width:200px;">超级管理员</div>
<div class="a t c td" style="left:677.30px;top:517.9px;width:200px;">2025-09-18 10:59:04</div>
<svg style="left:879.2px;top:518.8px" width="9" height="10" viewBox="0 0 9 10" ><use href="#edit"/></svg>
<div class="a t blue" style="left:889.7px;top:517.9px;">修改</div>
<svg style="left:920.8px;top:519.1999999999999px" width="8" height="9" viewBox="0 0 8 9" ><use href="#del"/></svg>
<div class="a t blue" style="left:931px;top:517.9px;">删除</div>
<svg style="left:962.8px;top:520.3px" width="7" height="7" viewBox="0 0 7 7" ><use href="#perm"/></svg>
<div class="a t blue" style="left:972px;top:517.9px;">权限</div>
<div class="a t c td" style="left:103.30px;top:550.4px;width:200px;">82075648</div>
<div class="a t c td" style="left:191.20px;top:550.4px;width:200px;">管理员</div>
<div class="a t c td" style="left:276.60px;top:550.4px;width:200px;">Super</div>
<div class="a" style="left:448px;top:549.5px;width:41px;height:13.8px;background:#5cb730;border-radius:7px"></div>
<div class="a" style="left:477px;top:551.1999999999999px;width:10.4px;height:10.4px;background:#fff;border-radius:50%"></div>
<div class="a" style="left:451.5px;top:550.8px;font-size:7.6px;line-height:11px;color:#fff">已启用</div>
<div class="a t c td" style="left:504.40px;top:550.4px;width:200px;">用户管理员</div>
<div class="a t c td" style="left:677.30px;top:550.4px;width:200px;">2025-09-18 10:59:04</div>
<svg style="left:879.2px;top:551.3px" width="9" height="10" viewBox="0 0 9 10" ><use href="#edit"/></svg>
<div class="a t blue" style="left:889.7px;top:550.4px;">修改</div>
<svg style="left:920.8px;top:551.6999999999999px" width="8" height="9" viewBox="0 0 8 9" ><use href="#del"/></svg>
<div class="a t blue" style="left:931px;top:550.4px;">删除</div>
<svg style="left:962.8px;top:552.8px" width="7" height="7" viewBox="0 0 7 7" ><use href="#perm"/></svg>
<div class="a t blue" style="left:972px;top:550.4px;">权限</div>
<div class="a t c td" style="left:103.30px;top:582.4px;width:200px;">431763456</div>
<div class="a t c td" style="left:191.20px;top:582.4px;width:200px;">测试者</div>
<div class="a t c td" style="left:276.60px;top:582.4px;width:200px;">Tester</div>
<div class="a" style="left:448px;top:581.5px;width:41px;height:13.8px;background:#5cb730;border-radius:7px"></div>
<div class="a" style="left:477px;top:583.1999999999999px;width:10.4px;height:10.4px;background:#fff;border-radius:50%"></div>
<div class="a" style="left:451.5px;top:582.8px;font-size:7.6px;line-height:11px;color:#fff">已启用</div>
<div class="a t c td" style="left:504.40px;top:582.4px;width:200px;">测试者</div>
<div class="a t c td" style="left:677.30px;top:582.4px;width:200px;">2025-09-18 10:59:04</div>
<svg style="left:879.2px;top:583.3px" width="9" height="10" viewBox="0 0 9 10" ><use href="#edit"/></svg>
<div class="a t blue" style="left:889.7px;top:582.4px;">修改</div>
<svg style="left:920.8px;top:583.6999999999999px" width="8" height="9" viewBox="0 0 8 9" ><use href="#del"/></svg>
<div class="a t blue" style="left:931px;top:582.4px;">删除</div>
<svg style="left:962.8px;top:584.8px" width="7" height="7" viewBox="0 0 7 7" ><use href="#perm"/></svg>
<div class="a t blue" style="left:972px;top:582.4px;">权限</div>
 </div>
</div>

</body></html>
